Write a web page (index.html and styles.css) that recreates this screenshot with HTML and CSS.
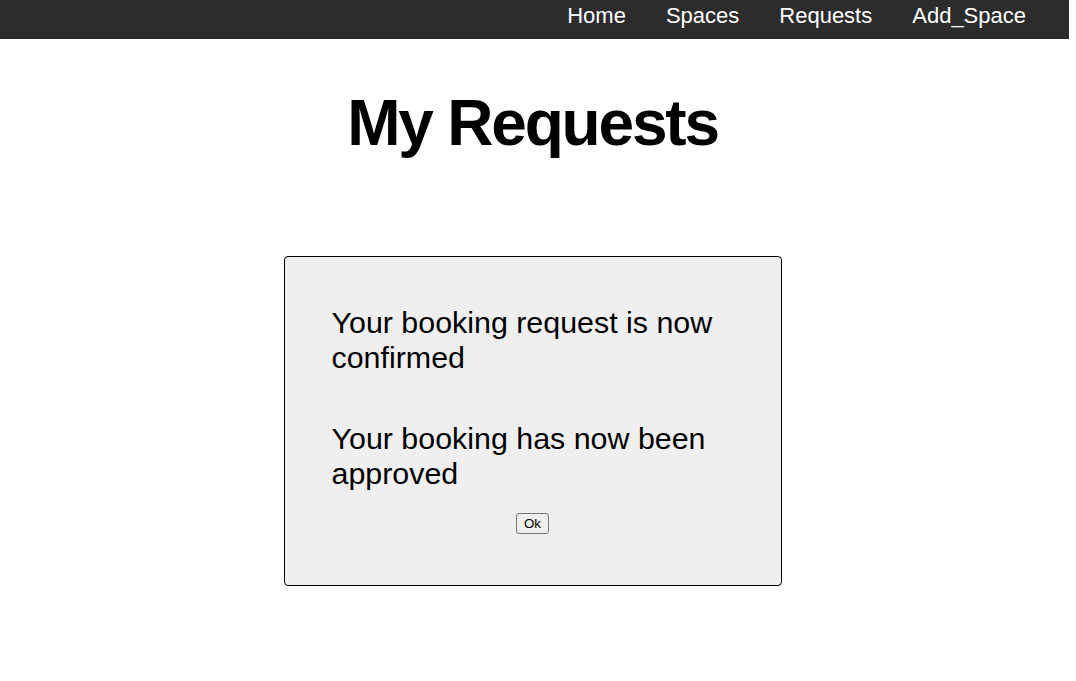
FILE: index.html
```html
<!DOCTYPE html>
<html lang="en">
<head>
<meta charset="utf-8">
<title>My Requests</title>
<link rel="stylesheet" href="styles.css">
</head>
<body>
<nav class="topnav">
  <a class="nav-link" href="#">Home</a>
  <a class="nav-link" href="#">Spaces</a>
  <a class="nav-link" href="#">Requests</a>
  <a class="nav-link" href="#">Add_Space</a>
</nav>
<main class="page">
  <h1 class="title">My Requests</h1>
  <section class="card">
    <p class="message">Your booking request is now confirmed</p>
    <p class="message second">Your booking has now been approved</p>
    <div class="actions"><button class="ok-btn" type="button">Ok</button></div>
  </section>
</main>
</body>
</html>
```
FILE: styles.css
```css
html, body {
  margin: 0;
  padding: 0;
  background: #ffffff;
}
body {
  font-family: "Liberation Sans", Arial, Helvetica, sans-serif;
  color: #000;
  width: 1069px;
}
.topnav {
  background: #2c2c2c;
  height: 39px;
  display: flex;
  justify-content: flex-end;
  align-items: center;
  padding-right: 23px;
}
.nav-link {
  color: #ffffff;
  text-decoration: none;
  font-size: 22px;
  padding: 0 20px;
  line-height: 32px;
  margin-bottom: 8px;
}
.page {
  width: 1065px;
  display: flex;
  flex-direction: column;
  align-items: center;
}
.title {
  font-size: 64px;
  letter-spacing: -2.2px;
  font-weight: bold;
  margin: 46px 0 0 0;
  line-height: 76px;
}
.card {
  box-sizing: border-box;
  width: 498px;
  margin-top: 95px;
  background: #efefef;
  border: 1px solid #000;
  border-radius: 4px;
  padding: 48px 47px 51px 47px;
}
.message {
  font-size: 30.4px;
  line-height: 35px;
  margin: 0;
}
.message.second {
  margin-top: 46px;
}
.actions {
  display: flex;
  justify-content: center;
  margin-top: 22px;
}
.ok-btn {
  font-family: "Liberation Sans", Arial, sans-serif;
  font-size: 13.33px;
  padding: 1px 7px;
  height: 21px;
  background: #efefef;
  border: 1px solid #767676;
  border-radius: 3px;
  color: #000;
}
```
